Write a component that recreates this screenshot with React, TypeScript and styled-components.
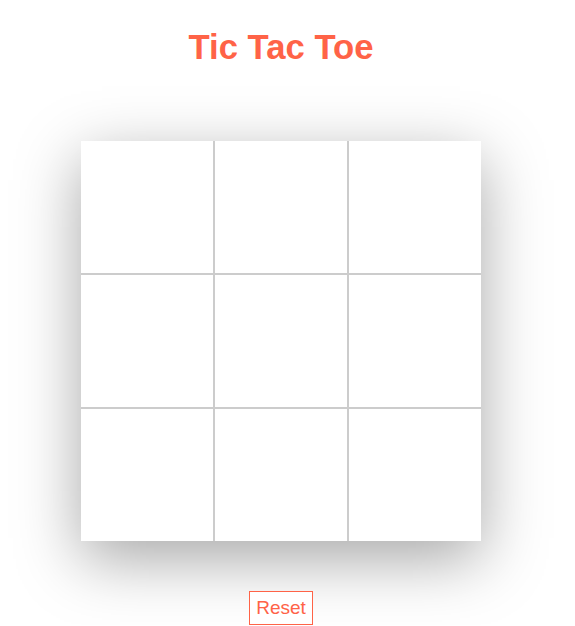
import React, { useState } from "react";
import styled, { createGlobalStyle } from "styled-components";

const GlobalStyle = createGlobalStyle`
  body {
    margin: 0;
    background: #fff;
    font-family: "Liberation Sans", Arial, sans-serif;
  }
`;

// the reference is centred on a 562px wide column
const Page = styled.div`
  display: flex;
  flex-direction: column;
  align-items: center;
  padding-right: 13px;
`;

const Title = styled.h1`
  margin: 27px 0 74px;
  font-size: 34.7px;
  line-height: 40px;
  font-weight: 700;
  color: tomato;
`;

const Board = styled.div`
  width: 400px;
  height: 400px;
  display: grid;
  grid-template-columns: repeat(3, 1fr);
  grid-template-rows: repeat(3, 1fr);
  gap: 2px;
  background: #ccc;
  box-shadow: 0 18px 60px rgba(0, 0, 0, 0.35);
`;

const Cell = styled.div`
  background: #fff;
  display: flex;
  align-items: center;
  justify-content: center;
  font-size: 64px;
  font-weight: 700;
  color: tomato;
  cursor: pointer;
`;

const ResetButton = styled.button`
  margin-top: 50px;
  padding: 6px 6px;
  font-family: "Liberation Sans", Arial, sans-serif;
  font-size: 19px;
  line-height: 20px;
  color: tomato;
  background: #fff;
  border: 1px solid tomato;
  border-radius: 0;
  cursor: pointer;
`;

const App: React.FC = () => {
  const [cells, setCells] = useState<string[]>(Array(9).fill(""));
  const [xNext, setXNext] = useState(true);

  const play = (i: number) => {
    if (cells[i]) return;
    const next = [...cells];
    next[i] = xNext ? "X" : "O";
    setCells(next);
    setXNext(!xNext);
  };

  const reset = () => {
    setCells(Array(9).fill(""));
    setXNext(true);
  };

  return (
    <Page>
      <GlobalStyle />
      <Title>Tic Tac Toe</Title>
      <Board>
        {cells.map((c, i) => (
          <Cell key={i} onClick={() => play(i)}>
            {c}
          </Cell>
        ))}
      </Board>
      <ResetButton onClick={reset}>Reset</ResetButton>
    </Page>
  );
};

export default App;
